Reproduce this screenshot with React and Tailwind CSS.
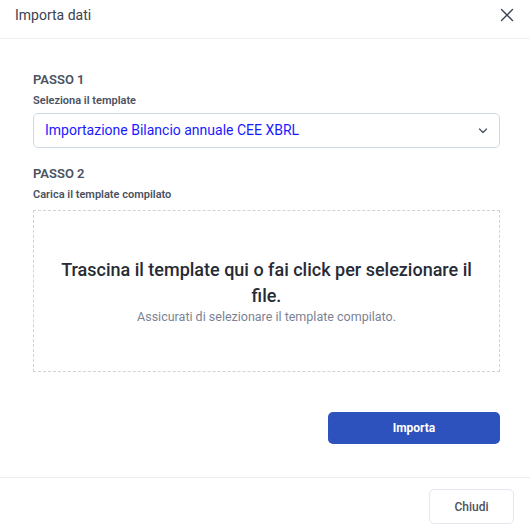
export default function App() {
  return (
    <div className="w-[530px] h-[530px] bg-white flex flex-col" style={{ fontFamily: "Roboto, 'Liberation Sans', sans-serif" }}>
      <div className="h-[39px] border-b border-[#eef1f5] flex items-center justify-between pl-[15px] pr-[16px] shrink-0">
        <span className="text-[14px] text-[#3a4252] leading-none -mt-[9px]">Importa dati</span>
        <svg width="14" height="14" viewBox="0 0 14 14" className="-mt-[8px]" fill="none" stroke="#3a4252" strokeWidth="1.4" strokeLinecap="round">
          <path d="M1.5 1.5 L12.5 12.5 M12.5 1.5 L1.5 12.5" />
        </svg>
      </div>
      <div className="pl-[33px] pr-[30px] pt-[33px] flex flex-col">
        <div className="text-[13px] leading-[16px] font-semibold text-[#4a5261]">PASSO 1</div>
        <div className="mt-[5px] text-[11px] leading-[16px] font-semibold text-[#4a5261]">Seleziona il template</div>
        <div className="mt-[4px] h-[35px] rounded-[5px] border border-[#cfd8e3] flex items-center justify-between pl-[11px] pr-[11px]">
          <span className="text-[14px] text-[#1a1aff]">Importazione Bilancio annuale CEE XBRL</span>
          <svg width="10" height="6" viewBox="0 0 10 6" fill="none" stroke="#4a5261" strokeWidth="1.3" strokeLinecap="round" strokeLinejoin="round">
            <path d="M1.5 1 L5 4.5 L8.5 1" />
          </svg>
        </div>
        <div className="mt-[18px] text-[13px] leading-[16px] font-semibold text-[#4a5261]">PASSO 2</div>
        <div className="mt-[5px] text-[11px] leading-[16px] font-semibold text-[#4a5261]">Carica il template compilato</div>
        <div className="mt-[7px] h-[162px] border border-dashed border-[#cfd3d8] flex flex-col items-center justify-center text-center px-[24px]">
          <div className="text-[18px] leading-[26px] font-medium text-[#262b36]">Trascina il template qui o fai click per selezionare il file.</div>
          <div className="text-[12.5px] leading-[16px] text-[#7a8394]">Assicurati di selezionare il template compilato.</div>
        </div>
        <div className="flex justify-end mt-[40px]">
          <button className="w-[172px] h-[32px] rounded-[5px] bg-[#2d51bd] text-white text-[12px] font-bold">Importa</button>
        </div>
      </div>
      <div className="mt-[33px] border-t border-[#eceef1] flex justify-end pt-[11px] pr-[16px]">
        <button className="w-[85px] h-[35px] rounded-[5px] border border-[#e3e7ee] bg-white text-[12px] font-medium text-[#4a5261] leading-[30px]">Chiudi</button>
      </div>
    </div>
  );
}
